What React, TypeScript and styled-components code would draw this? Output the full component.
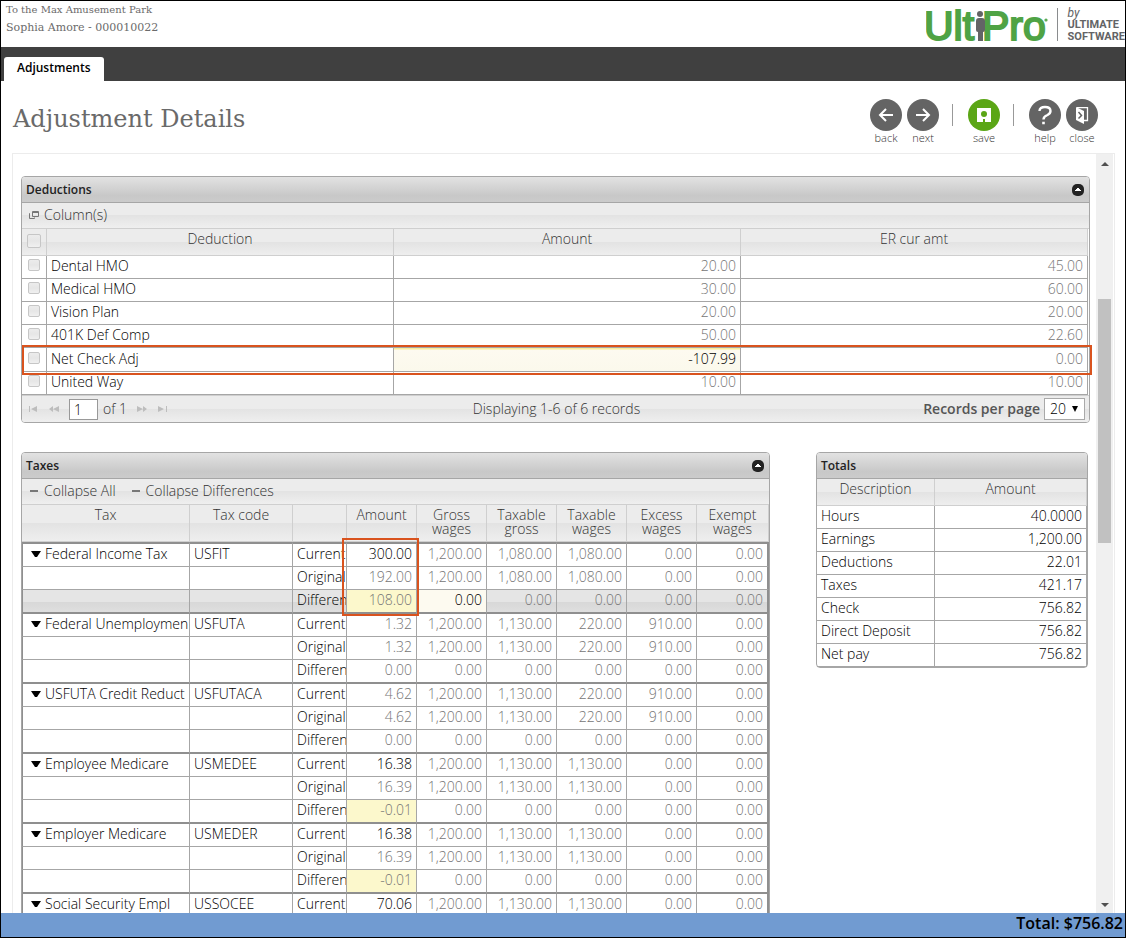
import React from "react";
import styled, { createGlobalStyle, css } from "styled-components";

const sans = `"Open Sans", "Noto Sans", sans-serif`;
const slab = `"DejaVu Serif", serif`;

const line = "#a6a6a6";
const softLine = "#cfcfcf";
const accent = "#d9531e";

const GlobalStyle = createGlobalStyle`
  *, *::before, *::after { box-sizing: border-box; }
  body { margin: 0; background: #fff; font: 300 14px/18px ${sans}; color: #000; }
  button, input, select { font: inherit; color: inherit; margin: 0; padding: 0; }
  button { border: 0; background: none; cursor: pointer; }
`;

const Shell = styled.div`
  height: 100vh;
  display: flex;
  flex-direction: column;
  border: 1px solid #000;
`;

const Masthead = styled.header`
  height: 46px;
  flex: none;
  display: flex;
  justify-content: space-between;
`;

const Identity = styled.div`
  padding: 0 5px;
  font: 400 10px/18px ${slab};
  color: #6b6b6b;
`;

const Person = styled.div`
  font-size: 11px;
  line-height: 18px;
`;

const Brand = styled.div`
  display: flex;
  padding-top: 6px;
`;

const Tagline = styled.div`
  margin: 1px 0 6px 9px;
  padding-left: 10px;
  border-left: 1px solid #8a8c8e;
  font: 700 11px/12px Roboto, sans-serif;
  color: #636466;
  em { display: block; font-weight: 400; font-size: 12px; line-height: 11px; }
`;

const TabBar = styled.nav`
  flex: none;
  height: 34px;
  padding: 10px 3px 0;
  background: #404040;
`;

const Tab = styled.button`
  height: 24px;
  padding: 0 13px 3px;
  border-radius: 3px 3px 0 0;
  background: #fff;
  color: #000;
  font-weight: 600;
  font-size: 12px;
`;

const TitleBar = styled.div`
  flex: none;
  height: 72px;
  padding: 18px 27px 0 12px;
  display: flex;
  justify-content: space-between;
`;

const Title = styled.h1`
  margin: 5px 0 0;
  font: 400 24px/30px ${slab};
  color: #6a6a6a;
`;

const Actions = styled.div`
  display: flex;
  gap: 5px;
`;

const Action = styled.button<{ $green?: boolean }>`
  width: 32px;
  display: flex;
  flex-direction: column;
  align-items: center;
  font-size: 11px;
  line-height: 14px;
  color: #333;
  svg {
    display: block;
    border-radius: 50%;
    background: ${(p) => (p.$green ? "#5ba616" : "#646464")};
  }
`;

const Divider = styled.span`
  width: 1px;
  height: 22px;
  margin: 5px 10px 0 8px;
  background: #999;
`;

const Viewport = styled.div`
  flex: 1;
  min-height: 0;
  margin: 0 10px 0 11px;
  display: flex;
  border: 1px solid #ececec;
  border-bottom: 0;
`;

const Scroller = styled.main`
  flex: 1;
  min-width: 0;
  overflow: auto;
  scrollbar-width: none;
  padding: 22px 6px 0 8px;
`;

const Track = styled.div`
  flex: none;
  width: 17px;
  margin-right: 1px;
  padding: 0 2px;
  display: flex;
  flex-direction: column;
  align-items: center;
  background: #f0f0f0;
  svg { flex: none; display: block; }
`;

const Groove = styled.div`
  flex: 1;
  width: 100%;
  display: flex;
  flex-direction: column;
  &::before { content: ""; flex: 125; }
  &::after { content: ""; flex: 350; }
`;

const Thumb = styled.div`
  flex: 245;
  background: #c1c1c1;
`;

const Panel = styled.section`
  min-width: 0;
  border: 1px solid ${line};
  border-radius: 4px;
`;

const PanelHead = styled.header`
  height: 26px;
  display: flex;
  justify-content: space-between;
  align-items: center;
  padding: 0 5px 0 4px;
  border-bottom: 1px solid ${line};
  border-radius: 3px 3px 0 0;
  background: linear-gradient(#e2e2e2, #c8c8c8 75%, #cbcbcb);
  h2 { margin: 0; font-size: 12px; font-weight: 600; color: #222; }
  button, svg { display: block; }
`;

const shade = css`
  background: linear-gradient(#ececec 48%, #e3e3e3 50%, #efefef);
`;

const Tools = styled.div`
  ${shade}
  height: 26px;
  display: flex;
  align-items: center;
  gap: 15px;
  padding: 0 7px 2px;
  border-bottom: 1px solid ${softLine};
  color: #333;
`;

const Tool = styled.button`
  display: flex;
  align-items: center;
  gap: 5px;
  svg { display: block; }
`;

const Grid = styled.table<{ $inset?: boolean }>`
  width: ${(p) => (p.$inset ? "calc(100% - 1px)" : "100%")};
  table-layout: fixed;
  border-collapse: separate;
  border-spacing: 0;
`;

const HeadRow = styled.tr`
  ${shade}
`;

const Th = styled.th<{ $tall?: boolean }>`
  height: ${(p) => (p.$tall ? "37px" : "27px")};
  padding: ${(p) => (p.$tall ? "3px 4px 0" : "1px 4px 0")};
  border-right: 1px solid ${softLine};
  border-bottom: 1px solid ${softLine};
  font-weight: 300;
  line-height: ${(p) => (p.$tall ? "14px" : "18px")};
  vertical-align: top;
  color: #333;
`;

const Td = styled.td<{ $num?: boolean; $muted?: boolean; $tint?: string }>`
  height: 23px;
  padding: 0 4px 2px;
  border-right: 1px solid ${line};
  border-bottom: 1px solid ${line};
  white-space: nowrap;
  overflow: hidden;
  text-align: ${(p) => (p.$num ? "right" : "left")};
  color: ${(p) => (p.$muted ? "#757575" : "#000")};
  background: ${(p) => p.$tint ?? "none"};
`;

const DeductionRow = styled.tr<{ $marked?: boolean }>`
  ${(p) =>
    p.$marked &&
    css`
      position: relative;
      ${Td} { height: 24px; }
      ${Td}:first-child::after {
        content: "";
        position: absolute;
        inset: -3px -4px -3px 0;
        border: 2px solid ${accent};
        pointer-events: none;
      }
    `}
`;

const Check = styled.input<{ $large?: boolean }>`
  appearance: none;
  display: block;
  width: ${(p) => (p.$large ? "14px" : "12px")};
  height: ${(p) => (p.$large ? "14px" : "12px")};
  margin: ${(p) => (p.$large ? "4px 1px" : "0 2px 2px")};
  border: 1px solid #c6c6c6;
  border-radius: 2px;
  background: linear-gradient(#ececec, #e6e6e6 50%, #f0f0f0);
`;

const Pager = styled.footer`
  ${shade}
  height: 27px;
  display: grid;
  grid-template-columns: 1fr auto 1fr;
  align-items: center;
  padding: 0 4px 0 6px;
  border-top: 1px solid ${softLine};
  border-radius: 0 0 3px 3px;
  color: #333;
`;

const PageNav = styled.div`
  display: flex;
  align-items: center;
  gap: 9px;
  button, svg { display: block; }
`;

const PageField = styled.label`
  display: flex;
  align-items: center;
  gap: 5px;
  input {
    width: 29px;
    height: 21px;
    padding-left: 4px;
    border: 1px solid #999;
    background: #fff;
    color: #000;
  }
`;

const PageSize = styled.label`
  display: flex;
  justify-content: flex-end;
  align-items: center;
  gap: 4px;
  font-weight: 600;
  color: #555;
`;

const SelectBox = styled.span`
  display: flex;
  align-items: center;
  position: relative;
  select {
    appearance: none;
    width: 41px;
    height: 22px;
    padding-left: 5px;
    border: 1px solid #a9a9a9;
    border-radius: 0;
    background: #fff;
    color: #000;
    font-weight: 300;
  }
  svg { position: absolute; right: 6px; pointer-events: none; }
`;

const Lower = styled.div`
  display: flex;
  align-items: flex-start;
  gap: 46px;
  margin: 29px 2px 0 0;
`;

const TaxPanel = styled(Panel)`
  flex: 1;
`;

const TotalsPanel = styled(Panel)`
  flex: none;
  width: 272px;
`;

const TaxGroup = styled.tbody<{ $first?: boolean }>`
  ${Td}:first-child { border-left: 1px solid #8f8f8f; }
  ${Td}:last-child { border-right: 2px solid #8f8f8f; }
  tr:nth-child(3) ${Td} { height: 24px; border-bottom: 2px solid #8f8f8f; }
  ${(p) =>
    p.$first &&
    css`
      tr:first-child ${Td} { height: 25px; border-top: 2px solid #8f8f8f; }
    `}
`;

const TaxRow = styled.tr<{ $selected?: boolean }>`
  ${(p) => p.$selected && "background: linear-gradient(#e5e5e5 48%, #d8d8d8 52%, #e0e0e0);"}
`;

const AmountTd = styled(Td)<{ $framed?: boolean }>`
  ${(p) =>
    p.$framed &&
    css`
      position: relative;
      overflow: visible;
      &::after {
        content: "";
        position: absolute;
        z-index: 1;
        inset: -6px -3px -50px -5px;
        border: 2px solid ${accent};
      }
    `}
`;

const Expander = styled.button`
  display: flex;
  align-items: center;
  gap: 4px;
  margin-left: 4px;
  white-space: nowrap;
  svg { flex: none; }
`;

const Footer = styled.footer`
  flex: none;
  height: 24px;
  padding: 0 2px;
  background: #719bd1;
  text-align: right;
  font-size: 16px;
  line-height: 21px;
  font-weight: 600;
  color: #000;
`;

const Collapse = () => (
  <button aria-label="Collapse section">
    <svg width="12" height="12" viewBox="0 0 12 12">
      <rect width="12" height="12" rx="5" fill="#222" />
      <path d="M3 7h6v-1h-1v-1h-1v-1h-2v1h-1v1h-1z" fill="#fff" />
    </svg>
  </button>
);

const Minus = () => (
  <svg width="10" height="10">
    <path d="M1 5h8" stroke="#777" strokeWidth="2" />
  </svg>
);

const Caret = ({ up }: { up?: boolean }) => (
  <svg width="8" height="20" viewBox="0 0 8 20">
    <path d={up ? "M0 12l4-4 4 4z" : "M0 10l4 4 4-4z"} fill="#505050" />
  </svg>
);

const Logo = () => (
  <svg width="122" height="38" viewBox="0 0 122 38" aria-label="UltiPro">
    <g fill="#4fa345" stroke="#4fa345" strokeWidth="2" fontFamily='"Liberation Sans", Arial, sans-serif' fontSize="41">
      <text x="-2" y="33">Ult</text>
      <text x="56" y="33">Pro</text>
      <circle cx="120" cy="13" r="0.6" />
    </g>
    <g fill="#636466">
      <circle cx="54" cy="7" r="3" />
      <path d="M50 14q0-3 3-3h3q3 0 3 3v9q0 2-2 2v9h-5v-9q-2 0-2-2z" />
    </g>
  </svg>
);

const PAGE_ICONS: Record<string, string> = {
  First: "M1 1v6h1v-6zM9 1v6l-6-3z",
  Previous: "M5 1L1 4l4 3M11 1v6l-6-3z",
  Next: "M1 1v6l6-3zM7 1l4 3-4 3",
  Last: "M1 1v6l6-3zM9 1v6h1v-6z",
};

const PageButton = ({ name }: { name: string }) => {
  const chevron = name === "Previous" || name === "Next";
  return (
    <button aria-label={name + " page"}>
      <svg width={chevron ? 12 : 11} height="8">
        <path d={PAGE_ICONS[name]} fill="#bdbdbd" />
      </svg>
    </button>
  );
};

const deductions = [
  ["Dental HMO", "20.00", "45.00"],
  ["Medical HMO", "30.00", "60.00"],
  ["Vision Plan", "20.00", "20.00"],
  ["401K Def Comp", "50.00", "22.60"],
  ["Net Check Adj", "-107.99", "0.00"],
  ["United Way", "10.00", "10.00"],
];

const zeros = ["0.00", "0.00", "0.00", "0.00", "0.00"];
const usual = ["1,200.00", "1,130.00", "1,130.00", "0.00", "0.00"];
const capped = ["1,200.00", "1,130.00", "220.00", "910.00", "0.00"];
const income = ["1,200.00", "1,080.00", "1,080.00", "0.00", "0.00"];

type Tax = { name: string; code: string; edited: boolean; amounts: string[]; wages: string[] };

const taxes: Tax[] = [
  { name: "Federal Income Tax", code: "USFIT", edited: true, amounts: ["300.00", "192.00", "108.00"], wages: income },
  { name: "Federal Unemploymen", code: "USFUTA", edited: false, amounts: ["1.32", "1.32", "0.00"], wages: capped },
  { name: "USFUTA Credit Reduct", code: "USFUTACA", edited: false, amounts: ["4.62", "4.62", "0.00"], wages: capped },
  { name: "Employee Medicare", code: "USMEDEE", edited: true, amounts: ["16.38", "16.39", "-0.01"], wages: usual },
  { name: "Employer Medicare", code: "USMEDER", edited: true, amounts: ["16.38", "16.39", "-0.01"], wages: usual },
  { name: "Social Security Empl", code: "USSOCEE", edited: true, amounts: ["70.06"], wages: usual },
];

const kinds = ["Current", "Original", "Difference"];

const totals = [
  ["Hours", "40.0000"],
  ["Earnings", "1,200.00"],
  ["Deductions", "22.01"],
  ["Taxes", "421.17"],
  ["Check", "756.82"],
  ["Direct Deposit", "756.82"],
  ["Net pay", "756.82"],
];

function Deductions() {
  return (
    <Panel>
      <PanelHead>
        <h2>Deductions</h2>
        <Collapse />
      </PanelHead>
      <Tools>
        <Tool>
          <svg width="10" height="10" fill="none" stroke="#777">
            <path d="M3.500 1.500h6v5h-6zM3 2.500h7M1 3.500h-.5v5h5v-1" />
          </svg>
          Column(s)
        </Tool>
      </Tools>
      <Grid $inset>
        <colgroup>
          <col style={{ width: 25 }} />
          <col />
          <col />
          <col />
        </colgroup>
        <thead>
          <HeadRow>
            <Th><Check $large type="checkbox" aria-label="Select all" /></Th>
            <Th>Deduction</Th>
            <Th>Amount</Th>
            <Th>ER cur amt</Th>
          </HeadRow>
        </thead>
        <tbody>
          {deductions.map(([name, amount, er]) => {
            const marked = name === "Net Check Adj";
            return (
              <DeductionRow key={name} $marked={marked}>
                <Td><Check type="checkbox" aria-label={name} /></Td>
                <Td>{name}</Td>
                <Td $num $muted={!marked} $tint={marked ? "linear-gradient(#f8ec9a 1px, #fdfaf0 2px, #fbf9ec)" : undefined}>
                  {amount}
                </Td>
                <Td $num $muted>{er}</Td>
              </DeductionRow>
            );
          })}
        </tbody>
      </Grid>
      <Pager>
        <PageNav>
          <PageButton name="First" />
          <PageButton name="Previous" />
          <PageField>
            <input defaultValue="1" aria-label="Page" />
            of 1
          </PageField>
          <PageButton name="Next" />
          <PageButton name="Last" />
        </PageNav>
        <span>Displaying 1-6 of 6 records</span>
        <PageSize>
          Records per page
          <SelectBox>
            <select defaultValue="20">
              <option>20</option>
            </select>
            <svg width="8" height="8"><path d="M1 1h6l-3 6z" fill="#000" /></svg>
          </SelectBox>
        </PageSize>
      </Pager>
    </Panel>
  );
}

function TaxRows({ tax, first }: { tax: Tax; first: boolean }) {
  return (
    <TaxGroup $first={first}>
      {tax.amounts.map((amount, i) => {
        const diff = i === 2;
        const selected = first && diff;
        return (
          <TaxRow key={kinds[i]} $selected={selected}>
            <Td>
              {i === 0 && (
                <Expander>
                  <svg width="10" height="8"><path d="M0 1h10l-4 6h-2z" fill="#000" /></svg>
                  {tax.name}
                </Expander>
              )}
            </Td>
            <Td>{i === 0 && tax.code}</Td>
            <Td>{kinds[i]}</Td>
            <AmountTd
              $num
              $framed={first && i === 0}
              $muted={!(tax.edited && i === 0)}
              $tint={diff && tax.edited ? "#fcf8cc" : undefined}
            >
              {amount}
            </AmountTd>
            {(diff ? zeros : tax.wages).map((value, k) => (
              <Td key={k} $num $muted={!(selected && k === 0)} $tint={selected && k === 0 ? "#fdfaf0" : undefined}>
                {value}
              </Td>
            ))}
          </TaxRow>
        );
      })}
    </TaxGroup>
  );
}

function Taxes() {
  return (
    <TaxPanel>
      <PanelHead>
        <h2>Taxes</h2>
        <Collapse />
      </PanelHead>
      <Tools>
        <Tool><Minus />Collapse All</Tool>
        <Tool><Minus />Collapse Differences</Tool>
      </Tools>
      <Grid>
        <colgroup>
          <col />
          {[103, 54, 70, 70, 70, 70, 70, 72].map((w, i) => (
            <col key={i} style={{ width: w }} />
          ))}
        </colgroup>
        <thead>
          <HeadRow>
            {["Tax", "Tax code", "", "Amount", "Gross wages", "Taxable gross", "Taxable wages", "Excess wages", "Exempt wages"].map((h) => (
              <Th key={h} $tall>{h}</Th>
            ))}
          </HeadRow>
        </thead>
        {taxes.map((tax, i) => (
          <TaxRows key={tax.code} tax={tax} first={i === 0} />
        ))}
      </Grid>
    </TaxPanel>
  );
}

function Totals() {
  return (
    <TotalsPanel>
      <PanelHead><h2>Totals</h2></PanelHead>
      <Grid>
        <colgroup>
          <col style={{ width: 118 }} />
          <col />
        </colgroup>
        <thead>
          <HeadRow>
            <Th>Description</Th>
            <Th>Amount</Th>
          </HeadRow>
        </thead>
        <tbody>
          {totals.map(([name, amount]) => (
            <tr key={name}>
              <Td>{name}</Td>
              <Td $num>{amount}</Td>
            </tr>
          ))}
        </tbody>
      </Grid>
    </TotalsPanel>
  );
}

export default function App() {
  return (
    <Shell>
      <GlobalStyle />
      <Masthead>
        <Identity>
          <div>To the Max Amusement Park</div>
          <Person>Sophia Amore - 000010022</Person>
        </Identity>
        <Brand>
          <Logo />
          <Tagline><em>by</em>ULTIMATE<br />SOFTWARE</Tagline>
        </Brand>
      </Masthead>
      <TabBar><Tab>Adjustments</Tab></TabBar>
      <TitleBar>
        <Title>Adjustment Details</Title>
        <Actions>
          <Action>
            <svg width="32" height="32" fill="none" stroke="#fff" strokeWidth="2"><path d="M23 16h-13M16 10l-6 6 6 6" /></svg>
            back
          </Action>
          <Action>
            <svg width="32" height="32" fill="none" stroke="#fff" strokeWidth="2"><path d="M9 16h13M16 10l6 6-6 6" /></svg>
            next
          </Action>
          <Divider />
          <Action $green>
            <svg width="32" height="32">
              <path d="M9 9h14v14h-6v-3h-2v3h-6z" fill="#fff" />
              <circle cx="16" cy="15" r="3" fill="#5ba616" />
            </svg>
            save
          </Action>
          <Divider />
          <Action>
            <svg width="32" height="32" fill="none" stroke="#fff" strokeWidth="2.4">
              <path d="M10.500 12q0-4 5.500-4t5.500 4q0 2.500-3 4-4 1.500-4 4.500M13.200 24h2.600" />
            </svg>
            help
          </Action>
          <Action>
            <svg width="32" height="32">
              <path d="M11 8.700h10.500v12.800h-4" fill="none" stroke="#fff" strokeWidth="1.300" />
              <path d="M10 8l8 4v13l-8-4z" fill="#fff" />
              <path d="M12.500 13l3 3.500-3 3" fill="none" stroke="#646464" strokeWidth="1.500" />
            </svg>
            close
          </Action>
        </Actions>
      </TitleBar>
      <Viewport>
        <Scroller>
          <Deductions />
          <Lower>
            <Taxes />
            <Totals />
          </Lower>
        </Scroller>
        <Track>
          <Caret up />
          <Groove><Thumb /></Groove>
          <Caret />
        </Track>
      </Viewport>
      <Footer>Total: $756.82</Footer>
    </Shell>
  );
}
